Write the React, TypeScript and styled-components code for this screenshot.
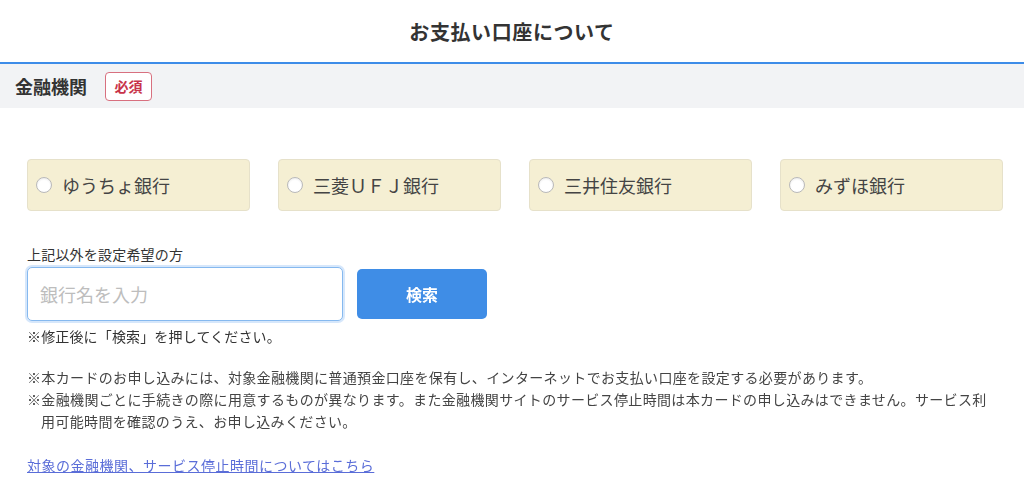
import { FC } from "react";
import styled, { createGlobalStyle } from "styled-components";

const GlobalStyle = createGlobalStyle`
  body {
    margin: 0;
    background: #fff;
    font-family: "Noto Sans CJK JP", "Noto Sans", sans-serif;
    color: #333;
  }
`;

const Page = styled.div`
  width: 1024px;
`;

const Header = styled.header`
  height: 62px;
  display: flex;
  align-items: center;
  justify-content: center;
  font-size: 20px;
  font-weight: 700;
  letter-spacing: 0.6px;
  color: #333;
  border-bottom: 2px solid #3d8ce8;
`;

const SectionHeading = styled.div`
  height: 44px;
  display: flex;
  align-items: center;
  gap: 18px;
  padding-left: 15px;
  background: #f2f3f5;
`;

const SectionTitle = styled.h2`
  margin: 0;
  font-size: 18px;
  font-weight: 700;
  color: #333;
`;

const RequiredBadge = styled.span`
  display: inline-flex;
  align-items: center;
  justify-content: center;
  width: 47px;
  height: 29px;
  box-sizing: border-box;
  border: 1px solid #d8707f;
  border-radius: 4px;
  background: #fff;
  color: #c8334a;
  font-size: 14px;
  font-weight: 700;
`;

const Body = styled.div`
  padding: 51px 23px 0 27px;
`;

const BankGrid = styled.div`
  display: grid;
  grid-template-columns: repeat(4, 223px);
  column-gap: 28px;
`;

const BankCard = styled.label`
  height: 52px;
  box-sizing: border-box;
  display: flex;
  align-items: center;
  gap: 10px;
  padding-left: 8px;
  background: #f5efd3;
  border: 1px solid #e6e1ca;
  border-radius: 4px;
  font-size: 18px;
  color: #444;
`;

const Radio = styled.span`
  width: 16px;
  height: 16px;
  box-sizing: border-box;
  border-radius: 50%;
  border: 1px solid #b9b9b9;
  background: #fff;
  box-shadow: inset 0 1px 2px rgba(0, 0, 0, 0.08);
  flex-shrink: 0;
`;

const FieldLabel = styled.div`
  margin-top: 33px;
  font-size: 14px;
  line-height: 20px;
  letter-spacing: 0.2px;
  color: #333;
`;

const SearchRow = styled.div`
  margin-top: 3px;
  display: flex;
  align-items: center;
  gap: 14px;
`;

const SearchInput = styled.input`
  width: 316px;
  height: 54px;
  box-sizing: border-box;
  padding: 0 12px;
  border: 1px solid #86b9ef;
  border-radius: 5px;
  box-shadow: 0 0 0 2px #d6e7fb;
  font-family: inherit;
  font-size: 18px;
  color: #333;
  outline: none;

  &::placeholder {
    color: #bdbdbd;
  }
`;

const SearchButton = styled.button`
  width: 130px;
  height: 50px;
  border: none;
  border-radius: 5px;
  background: #3f8de6;
  color: #fff;
  font-family: inherit;
  font-size: 16px;
  font-weight: 700;
`;

const Hint = styled.p`
  margin: 5px 0 0;
  font-size: 14px;
  line-height: 20px;
  letter-spacing: 0.15px;
  color: #333;
`;

const Notes = styled.div`
  margin-top: 20px;
  width: 968px;
`;

const Note = styled.p`
  margin: 0;
  padding-left: 14px;
  text-indent: -14px;
  font-size: 14px;
  line-height: 22px;
  letter-spacing: 0.35px;
  color: #444;
`;

const InfoLink = styled.a`
  display: inline-block;
  margin-top: 23px;
  font-size: 14px;
  line-height: 20px;
  letter-spacing: 0.5px;
  color: #5a6dd8;
  text-decoration: underline;
`;

const banks = ["ゆうちょ銀行", "三菱ＵＦＪ銀行", "三井住友銀行", "みずほ銀行"];

const App: FC = () => {
  return (
    <Page>
      <GlobalStyle />
      <Header>お支払い口座について</Header>
      <SectionHeading>
        <SectionTitle>金融機関</SectionTitle>
        <RequiredBadge>必須</RequiredBadge>
      </SectionHeading>
      <Body>
        <BankGrid>
          {banks.map((name) => (
            <BankCard key={name}>
              <Radio />
              {name}
            </BankCard>
          ))}
        </BankGrid>

        <FieldLabel>上記以外を設定希望の方</FieldLabel>
        <SearchRow>
          <SearchInput placeholder="銀行名を入力" autoFocus />
          <SearchButton>検索</SearchButton>
        </SearchRow>
        <Hint>※修正後に「検索」を押してください。</Hint>

        <Notes>
          <Note>
            ※本カードのお申し込みには、対象金融機関に普通預金口座を保有し、インターネットでお支払い口座を設定する必要があります。
          </Note>
          <Note>
            ※金融機関ごとに手続きの際に用意するものが異なります。また金融機関サイトのサービス停止時間は本カードの申し込みはできません。サービス利用可能時間を確認のうえ、お申し込みください。
          </Note>
        </Notes>

        <InfoLink href="#">対象の金融機関、サービス停止時間についてはこちら</InfoLink>
      </Body>
    </Page>
  );
};

export default App;
